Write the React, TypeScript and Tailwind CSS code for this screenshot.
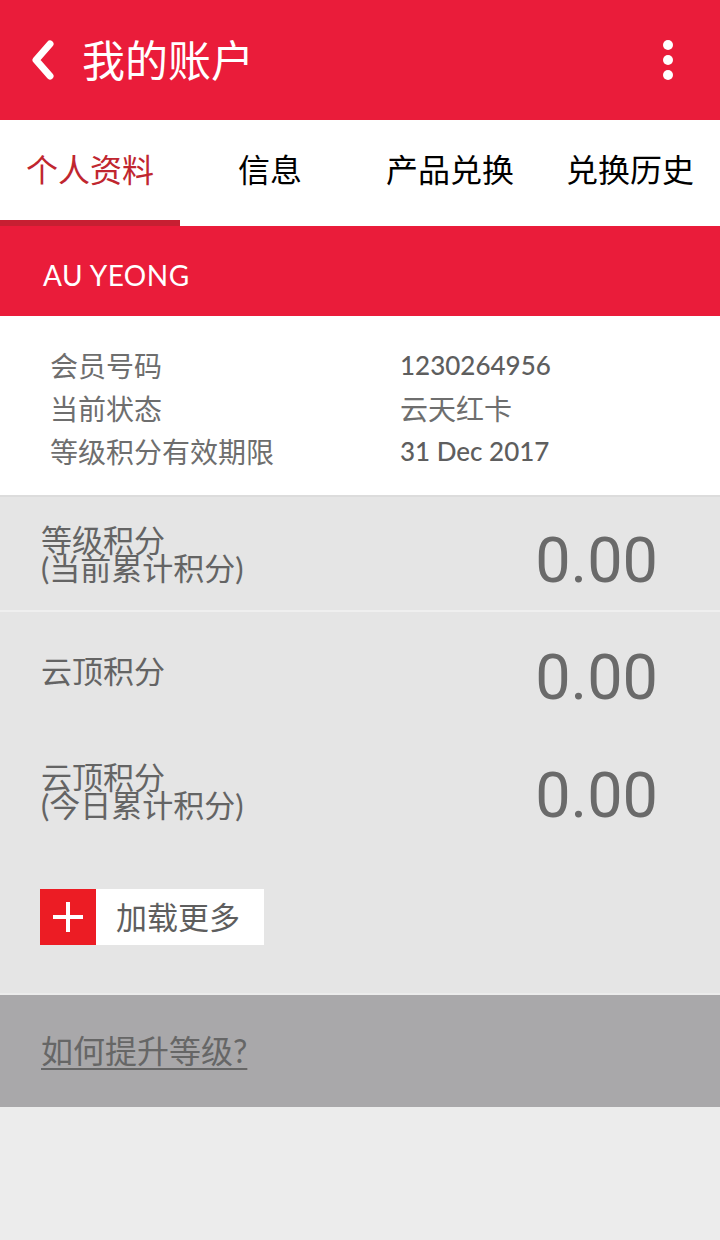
import React from 'react';

const cjk = "font-['Lato','Noto_Sans_CJK_SC',sans-serif]";

export default function App() {
  const tabs = ['个人资料', '信息', '产品兑换', '兑换历史'];
  const info = [
    { label: '会员号码', value: '1230264956', latin: true },
    { label: '当前状态', value: '云天红卡', latin: false },
    { label: '等级积分有效期限', value: '31 Dec 2017', latin: true }
  ];

  return (
    <div className={`w-[720px] h-[1240px] bg-[#ececec] ${cjk}`}>
      {/* header */}
      <div className="h-[120px] bg-[#ea1c3a] flex items-center pl-[28px] pr-[47px]">
        <svg width="30" height="44" viewBox="0 0 30 44" className="mr-[24px]">
          <path d="M22 6 L8 22 L22 38" stroke="white" strokeWidth="7" strokeLinecap="round" strokeLinejoin="round" fill="none" />
        </svg>
        <h1 className="text-white text-[43px] leading-none flex-1">我的账户</h1>
        <div className="flex flex-col gap-[5px]">
          <span className="w-[10px] h-[10px] rounded-full bg-white" />
          <span className="w-[10px] h-[10px] rounded-full bg-white" />
          <span className="w-[10px] h-[10px] rounded-full bg-white" />
        </div>
      </div>

      {/* tabs */}
      <div className="h-[106px] bg-white grid grid-cols-4">
        {tabs.map((t, i) => (
          <div key={t} className="flex flex-col">
            <div className={`flex-1 flex items-center justify-center text-[32px] ${i === 0 ? 'text-[#c0262f]' : 'text-black'}`}>{t}</div>
            <div className={`h-[6px] ${i === 0 ? 'bg-[#c71f32]' : 'bg-white'}`} />
          </div>
        ))}
      </div>

      {/* name */}
      <div className="h-[90px] bg-[#ea1c3a] flex items-center px-[43px] pt-[8px]">
        <span className="text-white text-[28px] tracking-[0.5px]">AU YEONG</span>
      </div>

      {/* info */}
      <div className="bg-white pt-[28px] pb-[22px] px-[50px] border-b-2 border-[#dcdcdc]">
        {info.map(r => (
          <div key={r.label} className="flex h-[43px] items-center text-[28px] text-[#6e6e6e]">
            <span className="w-[350px]">{r.label}</span>
            <span className={r.latin ? 'text-[26px] font-medium text-[#5e5e5e]' : ''}>{r.value}</span>
          </div>
        ))}
      </div>

      {/* points */}
      <div className="bg-[#e5e5e5]">
        <div className="h-[115px] flex items-center justify-between pl-[41px] pr-[62px] border-b-2 border-[#efefef]">
          <div className="text-[31px] leading-[28px] text-[#646464]">
            <div>等级积分</div>
            <div>(当前累计积分)</div>
          </div>
          <span className="font-['Roboto',sans-serif] text-[63px] text-[#6a6a6a] leading-none mt-[14px]">0.00</span>
        </div>
        <div className="h-[118px] flex items-center justify-between pl-[41px] pr-[62px]">
          <span className="text-[31px] text-[#646464]">云顶积分</span>
          <span className="font-['Roboto',sans-serif] text-[63px] text-[#6a6a6a] leading-none mt-[12px]">0.00</span>
        </div>
        <div className="h-[122px] flex items-center justify-between pl-[41px] pr-[62px]">
          <div className="text-[31px] leading-[28px] text-[#646464]">
            <div>云顶积分</div>
            <div>(今日累计积分)</div>
          </div>
          <span className="font-['Roboto',sans-serif] text-[63px] text-[#6a6a6a] leading-none mt-[8px]">0.00</span>
        </div>
        <div className="pt-[37px] pb-[48px] pl-[40px]">
          <div className="inline-flex h-[56px] bg-white">
            <div className="w-[56px] bg-[#ec1c24] flex items-center justify-center">
              <svg width="34" height="34" viewBox="0 0 34 34">
                <path d="M17 2 V32 M2 17 H32" stroke="white" strokeWidth="4" />
              </svg>
            </div>
            <div className="flex items-center pl-[20px] pr-[24px] text-[31px] text-[#5e5e5e]">加载更多</div>
          </div>
        </div>
      </div>

      {/* link */}
      <div className="mt-[2px] h-[112px] bg-[#a9a8aa] flex items-center px-[41px]">
        <span className="text-[32px] text-[#666] underline underline-offset-[5px] decoration-2">如何提升等级?</span>
      </div>
    </div>
  );
}
